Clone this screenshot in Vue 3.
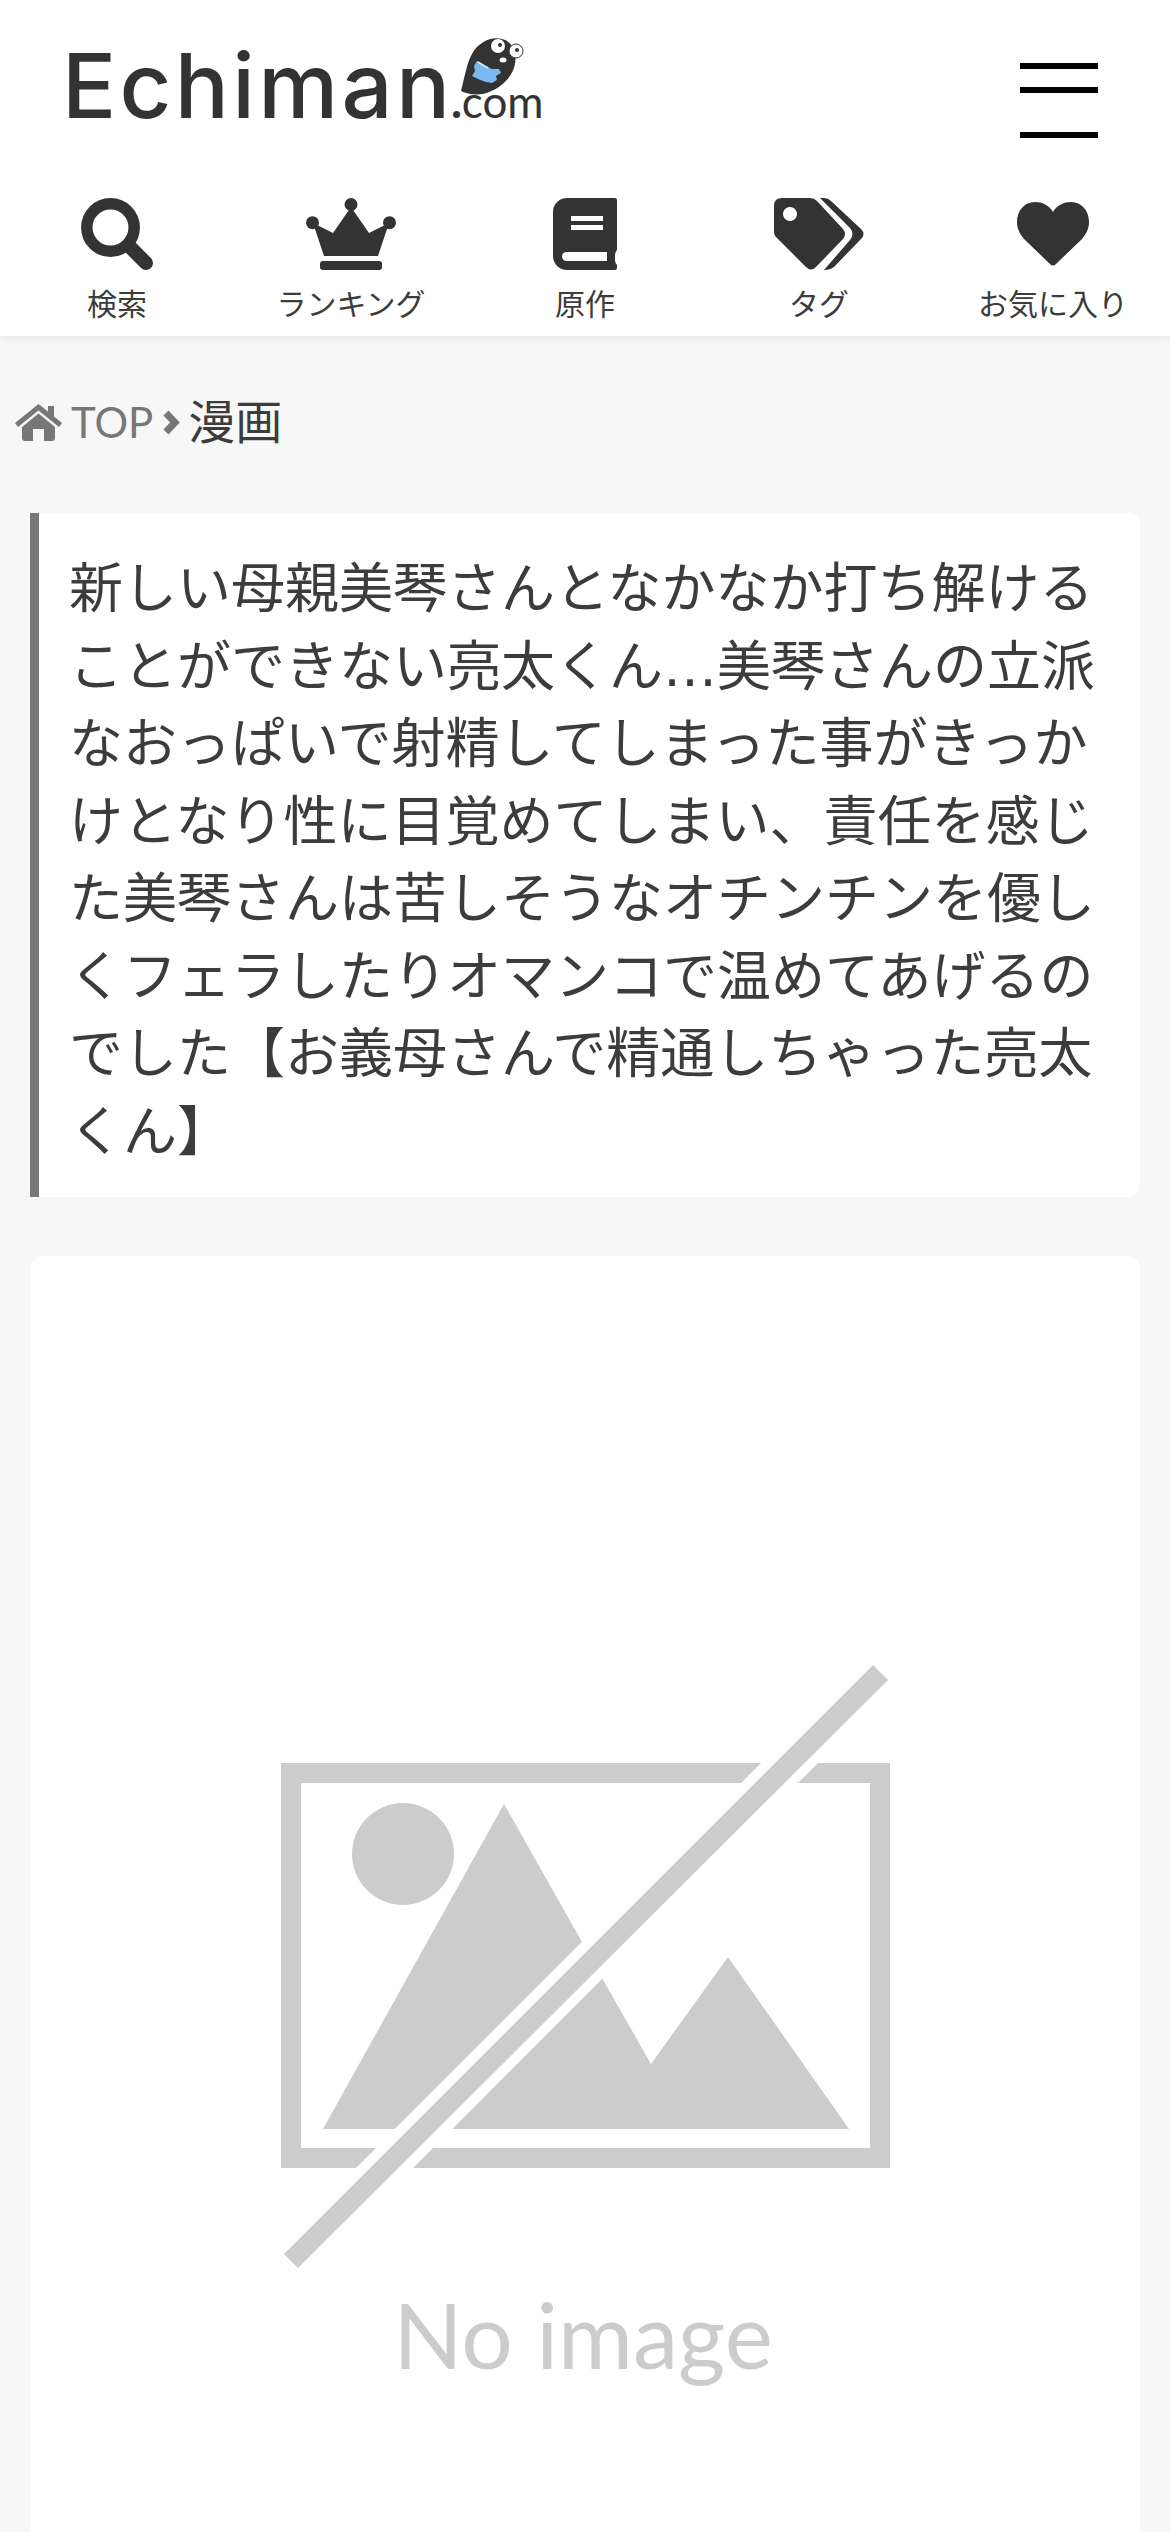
<script setup>
const description = '新しい母親美琴さんとなかなか打ち解けることができない亮太くん…美琴さんの立派なおっぱいで射精してしまった事がきっかけとなり性に目覚めてしまい、責任を感じた美琴さんは苦しそうなオチンチンを優しくフェラしたりオマンコで温めてあげるのでした【お義母さんで精通しちゃった亮太くん】'
</script>

<template>
  <div class="page">
    <header class="header">
      <div class="top-row">
        <a class="logo">
          <span class="logo-name">Echiman</span><span class="logo-dot">.</span><span class="logo-com">com</span>
          <svg class="mascot" width="60" height="60" viewBox="0 0 60 60">
            <path d="M1 55 C4 44 7 26 12 18 C18 6 32 0 42 3 C52 5 57 16 55 28 C52 42 40 54 23 58 C14 59 7 58 1 55Z" fill="#333" />
            <path d="M17 25 L24 29 L32 33 L39 33 L41 37 L36 40 L37 44 L32 47 L26 46 L18 43 L12 40 L15 35 L14 30Z" fill="#7ab8f0" />
            <path d="M18 26 L28 32" stroke="#d8ecff" stroke-width="1.5" fill="none" />
            <circle cx="38" cy="10" r="7" fill="#fff" />
            <circle cx="40" cy="9" r="2" fill="#333" />
            <circle cx="56" cy="15" r="7" fill="#fff" stroke="#333" stroke-width="1" />
            <circle cx="57" cy="14" r="2" fill="#333" />
            <ellipse cx="43" cy="24" rx="3.5" ry="2.5" fill="#fff" />
          </svg>
        </a>
        <div class="burger">
          <span class="bar"></span>
          <span class="bar bar-2"></span>
          <span class="bar bar-3"></span>
        </div>
      </div>
      <nav class="nav">
        <a class="nav-item">
          <span class="nav-icon">
            <svg width="72" height="72" viewBox="0 0 72 72">
              <circle cx="29.5" cy="29.5" r="23.7" fill="none" stroke="#333" stroke-width="11.5" />
              <path d="M50 50 L65 65" stroke="#333" stroke-width="14" stroke-linecap="round" />
            </svg>
          </span>
          <span class="nav-label">検索</span>
        </a>
        <a class="nav-item">
          <span class="nav-icon">
            <svg width="90" height="72" viewBox="0 0 90 72" fill="#333">
              <circle cx="45" cy="6.5" r="6.5" />
              <circle cx="6.5" cy="24.7" r="6.5" />
              <circle cx="83.5" cy="24.7" r="6.5" />
              <path d="M45 9 L63 35 L83 25 L72 58 H18 L7 25 L27 35Z" />
              <rect x="14" y="63" width="62" height="9" rx="3" />
            </svg>
          </span>
          <span class="nav-label">ランキング</span>
        </a>
        <a class="nav-item">
          <span class="nav-icon">
            <svg width="64" height="72" viewBox="0 0 64 72">
              <path d="M14 0 H62 a2 2 0 0 1 2 2 V52 q-2 2 -2 5 v5 q0 3 2 5 v3 a2 2 0 0 1 -2 2 H14 A14 14 0 0 1 0 58 V14 A14 14 0 0 1 14 0Z" fill="#333" />
              <rect x="18" y="18" width="32" height="5" fill="#fff" />
              <rect x="18" y="27" width="32" height="5" fill="#fff" />
              <path d="M54 54 H13.5 a4.5 4.5 0 0 0 0 9 H54Z" fill="#fff" />
            </svg>
          </span>
          <span class="nav-label">原作</span>
        </a>
        <a class="nav-item">
          <span class="nav-icon">
            <svg width="90" height="72" viewBox="0 0 90 72" fill="#333">
              <path fill-rule="evenodd" d="M8 0 H36 Q40 0 43 3 L69 31 Q73 36 69 41 L42 69 Q37 74 32 69 L2 39 Q0 37 0 34 V8 Q0 0 8 0Z M16 9 a7 7 0 1 0 0.01 0Z" />
              <path d="M46 0 H50 Q54 0 57 3 L87 31 Q92 36 87 41 L60 69 Q56 72 52 72 H50 L76 42 Q81 36 76 30Z" />
            </svg>
          </span>
          <span class="nav-label">タグ</span>
        </a>
        <a class="nav-item">
          <span class="nav-icon">
            <svg width="72" height="64" viewBox="0 0 72 64">
              <path d="M36 10 C32 3 25 0 18 0 C7 0 0 9 0 20 C0 27 3 32 7 37 L33 62 Q36 65 39 62 L65 37 C69 32 72 27 72 20 C72 9 65 0 54 0 C47 0 40 3 36 10Z" fill="#333" />
            </svg>
          </span>
          <span class="nav-label">お気に入り</span>
        </a>
      </nav>
    </header>

    <div class="breadcrumb">
      <svg class="home" width="47" height="37" viewBox="0 0 47 37" fill="#777">
        <path d="M0 19 L23.5 0 L33 7.5 V2 H39 V12.5 L47 19 L44 23 L23.5 6.5 L3 23Z" />
        <path d="M7 23 L23.5 9.5 L40 23 V34 q0 3 -3 3 H29 V25 H18 V37 H10 q-3 0 -3 -3Z" />
      </svg>
      <span class="crumb-top">TOP</span>
      <svg class="crumb-sep" width="17" height="25" viewBox="0 0 17 25">
        <path d="M3 3 L12 12.5 L3 22" fill="none" stroke="#777" stroke-width="7" />
      </svg>
      <span class="crumb-current">漫画</span>
    </div>

    <p class="description">{{ description }}</p>

    <div class="cover">
      <svg class="no-image" width="1110" height="1400" viewBox="30 1256 1110 1400">
        <g fill="#ccc">
          <path fill-rule="evenodd" d="M281 1763 H890 V2168 H281Z M301 1783 V2148 H870 V1783Z" />
          <circle cx="403" cy="1854" r="51" />
          <path d="M504 1804 L582 1942 L395 2129 H323Z" />
          <path d="M602 1978 L651 2064 L728 1957 L849 2129 H452Z" />
        </g>
        <path d="M800 1724 L857 1724 L270 2311 L213 2311Z" fill="#fff" />
        <path d="M873 1665 L888 1680 L298 2268 L284 2254Z" fill="#ccc" />
        <text x="583" y="2369" text-anchor="middle" class="no-image-text">No image</text>
      </svg>
    </div>
  </div>
</template>

<style>
body {
  background: #f7f7f7;
}
</style>

<style scoped>
.page {
  width: 1170px;
  height: 2532px;
  overflow: hidden;
  background: #f7f7f7;
  color: #333;
  font-family: Lato, "Noto Sans CJK JP", sans-serif;
}

.header {
  height: 336px;
  background: #fff;
  box-shadow: 0 2px 8px rgba(0, 0, 0, 0.08);
  position: relative;
}

.top-row {
  height: 198px;
  display: flex;
  justify-content: space-between;
  padding: 0 72px 0 62px;
  box-sizing: border-box;
}

.logo {
  position: relative;
  display: flex;
  align-items: baseline;
  height: 118px;
  line-height: 1;
}

.logo-name {
  font-family: Inter, sans-serif;
  font-size: 90px;
  font-weight: 500;
  letter-spacing: 3.3px;
  margin-top: 41px;
  color: #333;
}

.logo-dot {
  font-family: Lato, sans-serif;
  font-size: 44px;
  font-weight: 900;
  margin-left: -2px;
}

.logo-com {
  font-family: Lato, sans-serif;
  font-size: 44px;
  font-weight: 400;
}

.mascot {
  position: absolute;
  left: 398px;
  top: 36px;
  overflow: visible;
}

.burger {
  width: 78px;
  padding-top: 63px;
}

.bar {
  display: block;
  height: 6px;
  background: #000;
}

.bar-2 {
  margin-top: 18px;
}

.bar-3 {
  margin-top: 39px;
}

.nav {
  display: grid;
  grid-template-columns: repeat(5, 234px);
}

.nav-item {
  display: flex;
  flex-direction: column;
  align-items: center;
}

.nav-icon {
  height: 72px;
  display: flex;
  align-items: center;
  justify-content: center;
}

.nav-label {
  margin-top: 13px;
  font-size: 30px;
  line-height: 40px;
  color: #3c3c3c;
}

.breadcrumb {
  display: flex;
  align-items: center;
  height: 86px;
  margin-top: 43px;
  padding-left: 15px;
}

.home {
  margin-right: 9px;
}

.crumb-top {
  font-size: 42px;
  color: #777;
}

.crumb-sep {
  margin: 0 8px 0 10px;
}

.crumb-current {
  font-size: 47px;
  color: #3c3c3c;
  margin-bottom: 8px;
}

.description {
  margin: 48px 30px 0;
  padding: 38px 32px 26px 30px;
  background: #fff;
  border-left: 9px solid #777;
  border-radius: 0 12px 12px 0;
  font-family: "DejaVu Sans", "Noto Sans CJK JP", sans-serif;
  font-size: 54px;
  line-height: 77.5px;
  color: #3c3c3c;
}

.cover {
  margin: 59px 30px 0;
  background: #fff;
  border-radius: 14px;
  overflow: hidden;
}

.no-image {
  display: block;
}

.no-image-text {
  font-family: Lato, sans-serif;
  font-size: 91px;
  fill: #ccc;
}
</style>
